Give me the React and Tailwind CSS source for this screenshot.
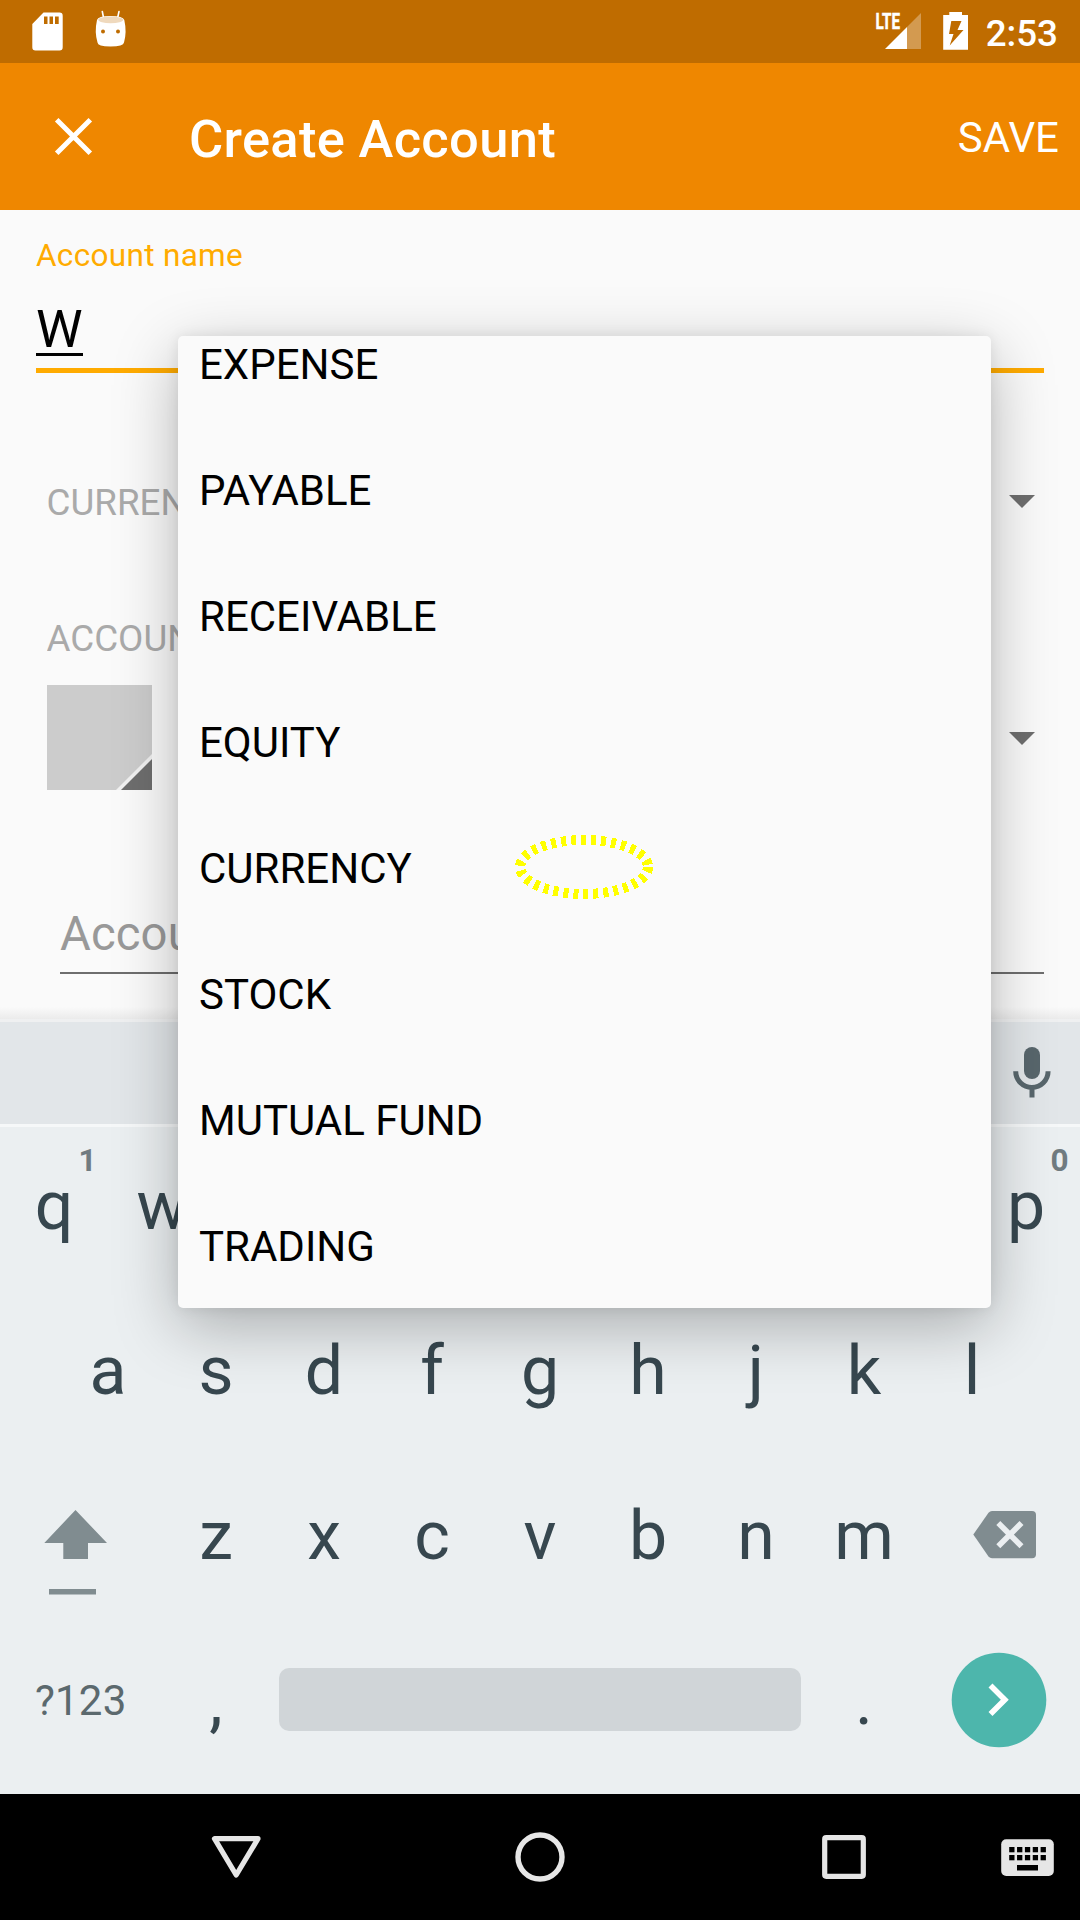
import React from "react";

const TYPES = ["EXPENSE", "PAYABLE", "RECEIVABLE", "EQUITY", "CURRENCY", "STOCK", "MUTUAL FUND", "TRADING"];
const ROW2 = ["a", "s", "d", "f", "g", "h", "j", "k", "l"];
const ROW3 = ["z", "x", "c", "v", "b", "n", "m"];

function StatusBar() {
  return (
    <div className="flex h-[63px] bg-[#bf6c00]">
      <svg viewBox="30 0 36 63" className="ml-[30px] h-[63px] w-[36px]">
        <path
          fill="#fff"
          fillRule="evenodd"
          d="M43.5 12.5H59.500a3.200 3.200 0 0 1 3.200 3.200V47.300a3.200 3.200 0 0 1-3.200 3.200H35.500a3.200 3.200 0 0 1-3.200-3.200V24ZM44 16.500v7.500h3.500v-7.500ZM49.500 16.500v7.500h3.500v-7.500ZM55 16.500v7.500h3.700v-7.500Z"
        />
      </svg>
      <svg viewBox="92 0 38 63" className="ml-[26px] h-[63px] w-[38px]">
        <path d="M102.300 11.500L103.600 18M119 11.500L117.600 18" stroke="#fff" strokeWidth="1.600" strokeLinecap="round" />
        <path fill="#fff" d="M97 20Q98 16 110.500 16T124.300 20Q127 32 124 42.500Q123.500 46.500 110.500 46.500T97.500 42.500Q94.300 32 97 20Z" />
        <ellipse cx="110.700" cy="19.800" rx="12.500" ry="3.400" fill="#efd9bd" />
        <circle cx="103" cy="31.500" r="2" fill="#bf6c00" />
        <circle cx="118" cy="31.500" r="2" fill="#bf6c00" />
      </svg>
      <div className="flex-1" />
      <svg viewBox="874 0 50 63" className="h-[63px] w-[50px]">
        <path fill="#d39a50" d="M907 27L921 13V49H907Z" />
        <path fill="#fff" d="M885 49L907 27V49Z" />
        <text x="875.500" y="29" fill="#fff" stroke="#fff" strokeWidth="0.500" fontFamily="Roboto" fontWeight="700" fontSize="22" textLength="24.500" lengthAdjust="spacingAndGlyphs">
          LTE
        </text>
      </svg>
      <svg viewBox="940 0 30 63" className="ml-[16px] h-[63px] w-[30px]">
        <path
          fill="#fff"
          fillRule="evenodd"
          d="M949.300 12H962V15H968V49.700H943.200V15H949.300ZM951.300 21L949 34H953.500L949.700 45.500L963.500 30H957.500L961.500 21Z"
        />
      </svg>
      <span className="ml-[15.500px] mr-[22px] mt-[1.500px] text-[36.750px] font-medium leading-[63px] text-white">2:53</span>
    </div>
  );
}

function AppBar() {
  return (
    <div className="flex h-[147px] bg-[#ef8700] text-white">
      <svg viewBox="50 63 50 147" className="ml-[50px] h-[147px] w-[50px]">
        <path d="M56.700 119.700L90.300 153.300M90.300 119.700L56.700 153.300" stroke="#fff" strokeWidth="5" />
      </svg>
      <h1 className="ml-[89px] mt-[3px] flex-1 text-[52.500px] font-medium leading-[147px] tracking-[0.300px]">Create Account</h1>
      <span className="mr-[21px] mt-[1px] text-[42px] leading-[147px]">SAVE</span>
    </div>
  );
}

function Caret() {
  return (
    <svg viewBox="0 0 26 13" className="mr-[45px] h-[13px] w-[26px]">
      <path d="M0 0H26L13 13Z" fill="#6e6e6e" />
    </svg>
  );
}

function Form() {
  return (
    <div className="flex h-[809px] flex-col bg-[#fafafa]">
      <label className="ml-[36px] mt-[28px] text-[31.500px] leading-[36px] tracking-[0.320px] text-[#ffab00]">Account name</label>
      <div className="mx-[36px] mt-[25px] h-[74px] border-b-[5px] border-[#ffab00]">
        <span className="block h-[57px] w-[47px] border-b-[3px] border-black text-[52.500px] leading-[60px] text-black">W</span>
      </div>
      <div className="mt-[107px] flex h-[44px] items-start justify-between">
        <span className="ml-[46.500px] mt-[1px] w-[131px] overflow-hidden text-[36.750px] leading-[44px] text-[#aaa]">CURREN</span>
        <div className="mt-[15px]">
          <Caret />
        </div>
      </div>
      <span className="ml-[46.500px] mt-[93px] w-[131px] overflow-hidden text-[36.750px] leading-[44px] text-[#aaa]">ACCOUN</span>
      <div className="mt-[24px] flex h-[105px] items-start justify-between">
        <svg viewBox="0 0 105 105" className="ml-[47px] h-[105px] w-[105px]">
          <path d="M0 0H105V105H0Z" fill="#ccc" />
          <path d="M105 69L69 105H105Z" fill="#f1f1f1" />
          <path d="M105 74L74 105H105Z" fill="#6e6e6e" />
        </svg>
        <div className="mt-[47px]">
          <Caret />
        </div>
      </div>
      <div className="ml-[60px] mr-[36px] mt-[116px] h-[68px] border-b-[2px] border-[#6e6e6e] text-[47.250px] leading-[56px] text-[#999]">
        <span className="block w-[118px] overflow-hidden tracking-[0.100px]">Accou</span>
      </div>
      <div className="mt-auto h-[12px] bg-linear-to-b from-[#fafafa] to-[#ebebeb]" />
    </div>
  );
}

function Key({ label, hint }) {
  return (
    <div className="relative w-[108px] text-center leading-[164px]">
      {label}
      {hint && <span className="absolute left-[78.500px] top-[19px] text-[31.500px] font-bold leading-[36px] text-[#707b80]">{hint}</span>}
    </div>
  );
}

function Keyboard() {
  return (
    <div className="h-[775px] bg-[#ebeff1] text-[68px] text-[#37474f]">
      <div className="flex h-[105px] justify-end border-t-[3px] border-[#eff0f1] bg-[#e2e6e9]">
        <svg viewBox="1010 1022 44 80" className="mr-[26px] h-[80px] w-[44px]">
          <rect x="1024" y="1047" width="16" height="32" rx="8" fill="#58666c" />
          <path d="M1015.700 1071.300a16.200 16.200 0 0 0 32.400 0M1032 1087V1097.500" fill="none" stroke="#58666c" strokeWidth="5" />
        </svg>
      </div>
      <div className="h-[165px] border-t-[3px] border-[#f6f8f9]">
        <div className="-mt-[3px] flex justify-between">
          <div className="flex">
            <Key label="q" hint="1" />
            <Key label="w" />
          </div>
          <Key label="p" hint="0" />
        </div>
      </div>
      <div className="flex h-[165px] justify-center">
        {ROW2.map((k) => (
          <Key key={k} label={k} />
        ))}
      </div>
      <div className="flex h-[165px]">
        <svg viewBox="40 1454 122 165" className="ml-[40px] h-[165px] w-[122px]">
          <path d="M75.500 1510L107 1543H88V1559H63.300V1543H44.300ZM49 1589H96V1594.500H49Z" fill="#808c90" />
        </svg>
        {ROW3.map((k) => (
          <Key key={k} label={k} />
        ))}
        <svg viewBox="970 1454 70 165" className="ml-[52px] h-[165px] w-[70px]">
          <path d="M992 1511H1032a4 4 0 0 1 4 4V1554.200a4 4 0 0 1-4 4H992Q990 1558.200 988.500 1556.500L973.300 1534.600L988.500 1512.700Q990 1511 992 1511Z" fill="#808c90" />
          <path d="M998.300 1523L1021.500 1546.200M1021.500 1523L998.300 1546.200" stroke="#ebeff1" strokeWidth="5.600" />
        </svg>
      </div>
      <div className="flex h-[165px]">
        <span className="w-[162px] pl-[35px] text-[42px] leading-[163px] tracking-[0.200px] text-[#5b696e]">?123</span>
        <Key label="," />
        <div className="ml-[9px] mt-[49px] h-[63px] w-[522px] rounded-[10px] bg-[#d0d5d8]" />
        <div className="ml-[9px]">
          <Key label="." />
        </div>
        <svg viewBox="951 1652 96 96" className="ml-[33px] mt-[33px] h-[96px] w-[96px]">
          <circle cx="999" cy="1700" r="47.300" fill="#4db6ac" />
          <path d="M990.500 1685.500L1004.800 1699.800L990.500 1714" fill="none" stroke="#fff" strokeWidth="5.600" />
        </svg>
      </div>
    </div>
  );
}

function NavBar() {
  return (
    <div className="flex h-[126px] bg-black">
      <svg viewBox="206 1794 60 126" className="ml-[206px] h-[126px] w-[60px]">
        <path d="M214.500 1838.700H258L236.200 1875Z" fill="none" stroke="#e6e6e6" strokeWidth="5.200" strokeLinejoin="round" />
      </svg>
      <svg viewBox="510 1794 60 126" className="ml-[244px] h-[126px] w-[60px]">
        <circle cx="540" cy="1857" r="22" fill="none" stroke="#e6e6e6" strokeWidth="5.400" />
      </svg>
      <svg viewBox="814 1794 60 126" className="ml-[244px] h-[126px] w-[60px]">
        <rect x="824.700" y="1837.700" width="38.600" height="38.600" rx="1.500" fill="none" stroke="#e6e6e6" strokeWidth="5.200" />
      </svg>
      <svg viewBox="998 1794 60 126" className="ml-[124px] h-[126px] w-[60px]">
        <rect x="1001.200" y="1839.200" width="52.600" height="36.800" rx="5" fill="#e6e6e6" />
        {[0, 1, 2, 3, 4].map((c) => (
          <g key={c}>
            <rect x={1009.200 + c * 7.850} y="1847" width="5.300" height="5.300" />
            <rect x={1009.200 + c * 7.850} y="1855" width="5.300" height="5.300" />
          </g>
        ))}
        <rect x="1017" y="1865" width="21" height="5.500" />
      </svg>
    </div>
  );
}

function TypeMenu() {
  return (
    <div className="absolute left-[178px] top-[336px] h-[972px] w-[813px] overflow-hidden rounded-[5px] bg-[#fafafa] shadow-[0_18px_64px_rgba(0,0,0,0.28),0_0_14px_rgba(0,0,0,0.08)]">
      <ul className="-mt-[34px]">
        {TYPES.map((t) => (
          <li key={t} className="h-[126px] pl-[21px] text-[42px] leading-[126px] text-black">
            {t}
          </li>
        ))}
      </ul>
      <svg viewBox="514 834 140 66" className="absolute left-[336px] top-[498px] h-[66px] w-[140px]">
        <ellipse cx="584" cy="867" rx="64" ry="27" fill="none" stroke="#ff0" strokeWidth="10" strokeDasharray="5 5" shapeRendering="crispEdges" />
      </svg>
    </div>
  );
}

export default function App() {
  return (
    <div className="relative h-[1920px] w-[1080px] overflow-hidden font-[Roboto,sans-serif]">
      <StatusBar />
      <AppBar />
      <Form />
      <Keyboard />
      <NavBar />
      <TypeMenu />
    </div>
  );
}
